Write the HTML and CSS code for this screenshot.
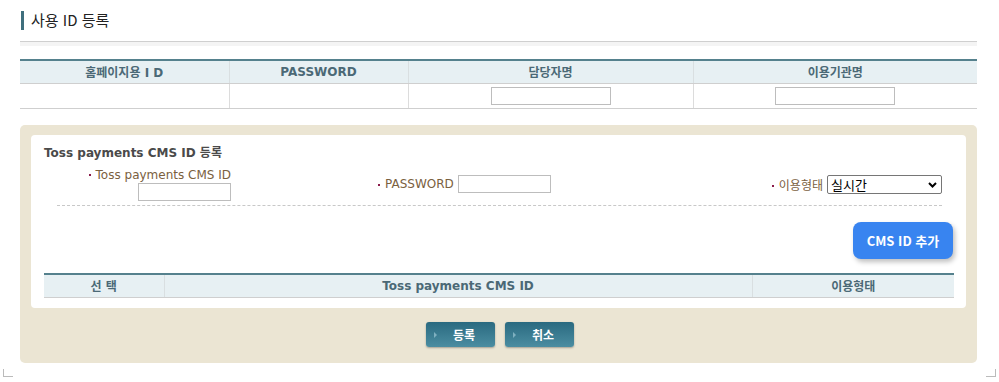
FILE: index.html
```html
<!DOCTYPE html>
<html lang="ko">
<head>
	<meta charset="UTF-8">
	<title>사용 ID 등록</title>

	<link rel="stylesheet" href="styles.css">
</head>
<body>
<div class="page">
	<h2 class="title">사용 ID 등록</h2>
	<div class="title-line"></div>

	<table class="grid top-grid">
		<colgroup>
			<col style="width:209px">
			<col style="width:179px">
			<col style="width:285px">
			<col>
		</colgroup>
		<tr>
			<th>홈페이지용 I D</th>
			<th>PASSWORD</th>
			<th>담당자명</th>
			<th>이용기관명</th>
		</tr>
		<tr>
			<td></td>
			<td></td>
			<td><input type="text" class="inp wide"></td>
			<td><input type="text" class="inp wide"></td>
		</tr>
	</table>

	<div class="box">
		<div class="panel">
			<h3 class="panel-title">Toss payments CMS ID 등록</h3>
			<div class="fields">
				<div class="field first">
					<span class="lbl">Toss payments CMS ID</span>
					<input type="text" class="inp">
				</div>
				<div class="field second">
					<span class="lbl">PASSWORD</span>
					<input type="password" class="inp">
				</div>
				<div class="field third">
					<span class="lbl">이용형태</span>
					<span class="sel-wrap">
						<select class="sel">
							<option>실시간</option>
							<option>배치</option>
						</select>
						<svg class="chev" width="9" height="6" viewBox="0 0 9 6"><path d="M1 1 L4.5 4.5 L8 1" fill="none" stroke="#000" stroke-width="2"/></svg>
					</span>
				</div>
			</div>
			<div class="add-row">
				<button type="button" class="add-btn">CMS ID 추가</button>
			</div>
			<table class="grid list-grid">
				<colgroup>
					<col style="width:120px">
					<col style="width:588px">
					<col>
				</colgroup>
				<tr>
					<th>선 택</th>
					<th>Toss payments CMS ID</th>
					<th>이용형태</th>
				</tr>
			</table>
		</div>
		<div class="actions">
			<button type="button" class="btn">등록</button>
			<button type="button" class="btn">취소</button>
		</div>
	</div>

	<div class="corners">
		<span class="corner left"></span>
		<span class="corner right"></span>
	</div>
</div>
</body>
</html>
```

FILE: styles.css
```css
*{
    margin: 0;
    padding: 0;
    box-sizing: border-box;
}

body{
    font-family: "DejaVu Sans", "Noto Sans CJK KR", sans-serif;
    font-size: 12px;
    color: #333;
    background: #fff;
}

.page{
    width: 999px;
    padding: 11px 22px 0 20px;
}

.title{
    font-family: "Noto Sans CJK KR", sans-serif;
    font-size: 15px;
    font-weight: normal;
    color: #222;
    border-left: 3px solid #3f6f7d;
    padding-left: 7px;
    height: 19px;
    line-height: 18px;
    margin-left: 1px;
}

.title-line{
    margin-top: 11px;
    border-top: 1px solid #cfcfcf;
    height: 5px;
    background: #f4f4f4;
}

.grid{
    width: 100%;
    border-collapse: collapse;
    table-layout: fixed;
    border-top: 2px solid #55818d;
}

.grid th{
    background: #e7f0f3;
    color: #4b6976;
    font-size: 12px;
    font-weight: bold;
    height: 23px;
    border-left: 1px solid #d9dfe1;
    border-bottom: 1px solid #cfcfcf;
    text-align: center;
}

.grid th:first-child{
    border-left: none;
}

.grid td{
    height: 25px;
    border-left: 1px solid #dcdcdc;
    border-bottom: 1px solid #cfcfcf;
    text-align: center;
}

.grid td:first-child{
    border-left: none;
}

.top-grid{
    margin-top: 13px;
}

.inp{
    width: 93px;
    height: 18px;
    border: 1px solid #bdbdbd;
    background: #fff;
    vertical-align: middle;
}

.inp.wide{
    width: 120px;
}

.box{
    margin-top: 16px;
    background: #ebe5d3;
    border-radius: 5px;
    padding: 10px 11px 16px 11px;
}

.panel{
    background: #fff;
    border-radius: 4px;
    padding: 11px 12px 10px 13px;
}

.panel-title{
    font-size: 12px;
    font-weight: bold;
    color: #4a4a4a;
    line-height: 14px;
}

.fields{
    display: flex;
    align-items: center;
    margin-top: 8px;
    padding-bottom: 4px;
    border-bottom: 1px dashed #c8c8c8;
    margin-left: 13px;
    margin-right: 12px;
}

.field{
    display: flex;
    align-items: center;
    gap: 4px;
}

.lbl{
    color: #7a6040;
    font-size: 12px;
    white-space: nowrap;
}

.lbl::before{
    content: "";
    display: inline-block;
    width: 2px;
    height: 2px;
    background: #8a1a4a;
    vertical-align: middle;
    margin-right: 5px;
}

.field.first{
    width: 174px;
    flex-direction: column;
    align-items: flex-end;
    gap: 1px;
}

.field.second{
    margin-left: 147px;
}

.field.third{
    margin-left: auto;
}

.sel-wrap{
    position: relative;
    display: block;
    width: 115px;
    height: 19px;
}

.sel{
    appearance: none;
    display: block;
    width: 115px;
    height: 19px;
    padding: 0 16px 0 3px;
    font-family: "Noto Sans CJK KR", sans-serif;
    font-size: 13px;
    line-height: 17px;
    border: 1px solid #767676;
    border-radius: 2px;
    background: #fff;
    color: #000;
}

.chev{
    position: absolute;
    right: 5px;
    top: 7px;
    pointer-events: none;
}

.add-row{
    display: flex;
    justify-content: flex-end;
    margin-top: 16px;
    padding-right: 1px;
}

.add-btn{
    width: 100px;
    height: 37px;
    border: none;
    border-radius: 8px;
    background: #3884f0;
    color: #fff;
    font-family: "Noto Sans CJK KR", sans-serif;
    font-size: 13px;
    font-weight: bold;
    box-shadow: 2px 3px 5px rgba(0, 0, 0, 0.25);
}

.list-grid{
    margin-top: 14px;
}

.list-grid th{
    height: 24px;
}

.actions{
    display: flex;
    justify-content: center;
    gap: 10px;
    margin-top: 14px;
    padding-left: 2px;
}

.btn{
    position: relative;
    width: 69px;
    height: 25px;
    border: none;
    border-radius: 3px;
    background: linear-gradient(#2a6a80, #4b8da1);
    color: #fff;
    font-family: "Noto Sans CJK KR", sans-serif;
    font-size: 12px;
    font-weight: bold;
    padding-left: 8px;
    box-shadow: 0 1px 2px rgba(0, 0, 0, 0.3);
}

.btn::before{
    content: "";
    position: absolute;
    left: 8px;
    top: 10px;
    border-left: 3px solid #7fb0c0;
    border-top: 3px solid transparent;
    border-bottom: 3px solid transparent;
}

.corners{
    display: flex;
    justify-content: space-between;
    margin: 6px -19px 0 -17px;
}

.corner{
    width: 10px;
    height: 8px;
    border-bottom: 1px solid #bbb;
}

.corner.left{
    border-left: 1px solid #bbb;
}

.corner.right{
    border-right: 1px solid #bbb;
}
```
